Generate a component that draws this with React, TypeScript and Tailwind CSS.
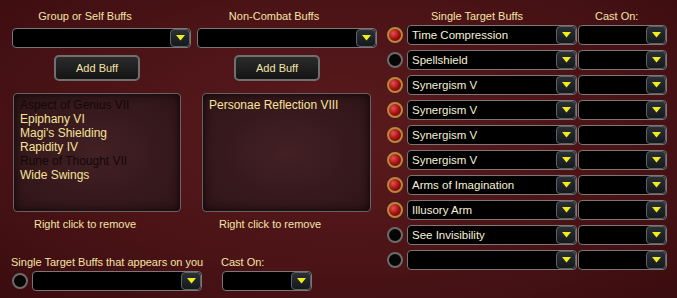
import React from "react";

const txt = "text-[#f4e4a6]";

function Arrow() {
  return (
    <div className="w-[20px] h-full shrink-0 rounded-[4px] border border-[#5d6266] bg-[linear-gradient(#2a3035,#15191c)] flex items-center justify-center">
      <svg width="9" height="6" viewBox="0 0 9 6">
        <path d="M0 0 H9 L4.5 5.5 Z" fill="#f2ec1c" />
      </svg>
    </div>
  );
}

function Drop({ w, text }: { w: string; text?: string }) {
  return (
    <div className={`${w} h-[20px] flex rounded-[4px] border border-[#7c7676] bg-black overflow-hidden`}>
      <div className="flex-1 px-[4px] text-[11.5px] leading-[18px] text-[#f6f0d8] whitespace-nowrap overflow-hidden">{text}</div>
      <Arrow />
    </div>
  );
}

function Dot({ on }: { on: boolean }) {
  return on ? (
    <div className="w-[16px] h-[16px] rounded-full border-2 border-[#b48a3c] bg-[radial-gradient(circle_at_35%_35%,#e85050,#9c0d0d_55%,#5a0505)] shrink-0" />
  ) : (
    <div className="w-[16px] h-[16px] rounded-full border-2 border-[#6d6a6a] bg-[#060606] shrink-0" />
  );
}

function AddBtn() {
  return (
    <div className={`w-[86px] h-[26px] rounded-[5px] border-2 border-[#6f6f6f] bg-[linear-gradient(#2b2b2b,#141414)] flex items-center justify-center text-[11px] ${txt}`}>
      Add Buff
    </div>
  );
}

function ListBox({ items, ml, w }: { items: { t: string; dim?: boolean }[]; ml: string; w: string }) {
  return (
    <div className={`${ml} ${w} h-[119px] mt-[12px] rounded-[4px] border border-[#6a6262] bg-[radial-gradient(ellipse_at_center,#422024,#2e1417)] shadow-[inset_0_0_8px_rgba(0,0,0,0.8)] pt-[4px] pl-[6px]`}>
      {items.map((it) => (
        <div key={it.t} className={`text-[12px] leading-[14px] ${it.dim ? "text-[#120808]" : "text-[#f6e39a]"}`}>{it.t}</div>
      ))}
    </div>
  );
}

const rows = [
  { on: true, t: "Time Compression" },
  { on: false, t: "Spellshield" },
  { on: true, t: "Synergism V" },
  { on: true, t: "Synergism V" },
  { on: true, t: "Synergism V" },
  { on: true, t: "Synergism V" },
  { on: true, t: "Arms of Imagination" },
  { on: true, t: "Illusory Arm" },
  { on: false, t: "See Invisibility" },
  { on: false, t: "" },
];

export default function App() {
  return (
    <div
      className="w-[677px] h-[298px] overflow-hidden flex bg-[radial-gradient(ellipse_at_50%_45%,#5a1a1d,#4a1316_60%,#3a0c0f)]"
      style={{ fontFamily: "'Liberation Sans', Arial, sans-serif" }}
    >
      {/* left */}
      <div className="w-[387px] shrink-0 flex flex-col">
        <div className="flex">
          {/* group or self */}
          <div className="ml-[12px] w-[179px] flex flex-col">
            <div className={`w-[146px] text-center mt-[10px] text-[11px] leading-[12px] ${txt}`}>Group or Self Buffs</div>
            <div className="mt-[6px]"><Drop w="w-[179px]" /></div>
            <div className="ml-[42px] mt-[7px]"><AddBtn /></div>
            <ListBox
              ml="ml-[1px]"
              w="w-[168px]"
              items={[
                { t: "Aspect of Genius VII", dim: true },
                { t: "Epiphany VI" },
                { t: "Magi's Shielding" },
                { t: "Rapidity IV" },
                { t: "Rune of Thought VII", dim: true },
                { t: "Wide Swings" },
              ]}
            />
            <div className={`w-[146px] text-center mt-[6px] text-[11px] leading-[12px] ${txt}`}>Right click to remove</div>
          </div>
          {/* non-combat */}
          <div className="ml-[6px] w-[180px] flex flex-col">
            <div className={`w-[154px] text-center mt-[10px] text-[11px] leading-[12px] ${txt}`}>Non-Combat Buffs</div>
            <div className="mt-[6px]"><Drop w="w-[180px]" /></div>
            <div className="ml-[37px] mt-[7px]"><AddBtn /></div>
            <ListBox ml="ml-[5px]" w="w-[169px]" items={[{ t: "Personae Reflection VIII" }]} />
            <div className={`w-[146px] text-center mt-[6px] text-[11px] leading-[12px] ${txt}`}>Right click to remove</div>
          </div>
        </div>
        {/* bottom */}
        <div className="flex mt-[26px]">
          <div className="ml-[11px] w-[191px]">
            <div className={`text-[11px] leading-[12px] whitespace-nowrap ${txt}`}>Single Target Buffs that appears on you</div>
            <div className="flex items-center gap-[4px] mt-[3px] ml-[1px]">
              <Dot on={false} />
              <Drop w="w-[170px]" />
            </div>
          </div>
          <div className="ml-[19px]">
            <div className={`text-[11px] leading-[12px] ${txt}`}>Cast On:</div>
            <div className="mt-[3px] ml-[1px]"><Drop w="w-[90px]" /></div>
          </div>
        </div>
      </div>
      {/* right */}
      <div className="flex flex-col">
        <div className="flex mt-[10px] h-[12px]">
          <div className={`ml-[44px] w-[91px] text-center text-[11px] leading-[12px] whitespace-nowrap ${txt}`}>Single Target Buffs</div>
          <div className={`ml-[73px] w-[43px] text-center text-[11px] leading-[12px] whitespace-nowrap ${txt}`}>Cast On:</div>
        </div>
        <div className="flex flex-col gap-[5px] mt-[3px]">
          {rows.map((r, i) => (
            <div key={i} className="flex items-center">
              <Dot on={r.on} />
              <div className="ml-[4px]"><Drop w="w-[170px]" text={r.t} /></div>
              <div className="ml-[1px]"><Drop w="w-[89px]" /></div>
            </div>
          ))}
        </div>
      </div>
    </div>
  );
}
